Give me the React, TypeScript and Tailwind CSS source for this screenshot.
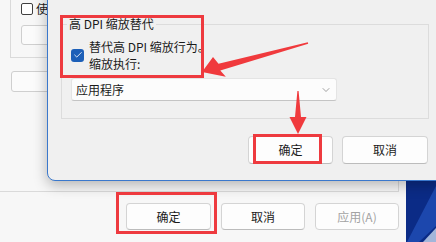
import { ChevronDown, Check } from "lucide-react";

const font = "font-['Noto_Sans_CJK_SC','Noto_Sans',sans-serif]";

function WinButton({ label, disabled, className = "" }: { label: string; disabled?: boolean; className?: string }) {
  return (
    <div
      className={`flex items-center justify-center rounded-[4px] border border-[#d4d4d4] border-b-[#bcbcbc] bg-[#fdfdfd] text-[12px] ${
        disabled ? "text-[#a3a3a3] bg-[#f6f6f6] border-b-[#d4d4d4]" : "text-[#1b1b1b]"
      } ${className}`}
    >
      {label}
    </div>
  );
}

function Wallpaper() {
  return (
    <svg width="30" height="242" viewBox="0 0 30 242" className="block">
      <rect width="30" height="242" fill="#0b2b86" />
      <polygon points="30,186 30,226 13,242 1,242" fill="#1c47ad" />
      <polygon points="30,228 30,242 17,242" fill="#a3b6da" />
    </svg>
  );
}

function BackgroundWindow() {
  return (
    <div className="flex h-full w-[406px] flex-col bg-[#f7f7f7] shadow-[2px_0_6px_rgba(0,0,0,0.25)]">
      {/* upper group */}
      <div className="ml-[10px] flex h-[58px] w-[60px] flex-col border-b border-l border-[#dadada] pl-[10px] pt-[3px]">
        <div className="flex items-center gap-[3px]">
          <div className="h-[12px] w-[12px] rounded-[2px] border border-[#404040] bg-white" />
          <span className="text-[12px] leading-[12px] text-[#1b1b1b]">使</span>
        </div>
        <div className="mt-[10px] h-[20px] w-[60px] rounded-[3px] border border-[#cfcfcf] bg-[#fbfbfb]" />
      </div>
      <div className="ml-[11px] mt-[13px] h-[21px] w-[80px] rounded-[3px] border border-[#cfcfcf] bg-[#fbfbfb]" />
      {/* big group edge */}
      <div className="h-[100px] w-[399px] border-b border-r border-[#dadada]" />
      {/* footer */}
      <div className="flex justify-end gap-[10px] pr-[7px] pt-[11px]">
        <WinButton label="确定" className="h-[27px] w-[85px]" />
        <WinButton label="取消" className="h-[27px] w-[84px]" />
        <WinButton label="应用(A)" disabled className="h-[27px] w-[84px]" />
      </div>
    </div>
  );
}

function Dialog() {
  return (
    <div className="absolute left-[47px] top-[-60px] flex w-[394px] flex-col rounded-bl-[8px] border border-[#3a78cc] bg-[#f0f0f0] pl-[13px] pr-[12px] pt-[83px] pb-[16px] shadow-[0_4px_14px_rgba(0,0,0,0.28)]">
      <div className="relative h-[95px] w-[368px] border border-[#dcdcdc] pl-[9px] pt-[13px]">
        <span className="absolute left-[5px] top-[-10px] bg-[#f0f0f0] px-[2px] text-[12px] leading-[17px] text-[#1b1b1b]">
          高 DPI 缩放替代
        </span>
        <div className="flex items-center gap-[5px]">
          <div className="flex h-[13px] w-[13px] items-center justify-center rounded-[3px] bg-[#1c5fb8]">
            <Check size={10} strokeWidth={2} color="#ffffff" />
          </div>
          <div className="text-[12px] leading-[17px] text-[#1b1b1b]">
            替代高 DPI 缩放行为。
            <br />
            缩放执行:
          </div>
        </div>
        <div className="mt-[6px] flex h-[23px] w-[266px] items-center justify-between rounded-[3px] border border-[#e4e4e4] border-b-[#c4c4c4] bg-[#fcfcfc] pl-[4px] pr-[4px]">
          <span className="text-[12px] text-[#1b1b1b]">应用程序</span>
          <ChevronDown size={12} strokeWidth={1} color="#444" />
        </div>
      </div>
      <div className="mt-[17px] flex justify-end gap-[9px]">
        <WinButton label="确定" className="h-[28px] w-[85px]" />
        <WinButton label="取消" className="h-[28px] w-[86px]" />
      </div>
    </div>
  );
}

function Annotations() {
  return (
    <>
      <div className="absolute left-[60px] top-[15px] h-[63px] w-[144px] border-[3px] border-[#ee3a3f]" />
      <div className="absolute left-[253px] top-[134px] h-[30px] w-[69px] border-[3px] border-[#ee3a3f]" />
      <div className="absolute left-[116px] top-[192px] h-[42px] w-[101px] border-[3px] border-[#ee3a3f]" />
      <svg className="pointer-events-none absolute inset-0" width="436" height="242" viewBox="0 0 436 242">
        <polygon
          points="307.8,42.3 218.5,63.8 213,57 202,72 225.8,76.8 220.3,70.6 308.2,43.7"
          fill="#f03a3d"
        />
        <polygon points="297.4,91 295,117 289.5,117 298,134 306.5,117 301,117 298.6,91" fill="#f03a3d" />
      </svg>
    </>
  );
}

export default function App() {
  return (
    <div className={`relative flex h-[242px] w-[436px] overflow-hidden ${font}`}>
      <BackgroundWindow />
      <div className="flex-1">
        <Wallpaper />
      </div>
      <Dialog />
      <Annotations />
    </div>
  );
}
